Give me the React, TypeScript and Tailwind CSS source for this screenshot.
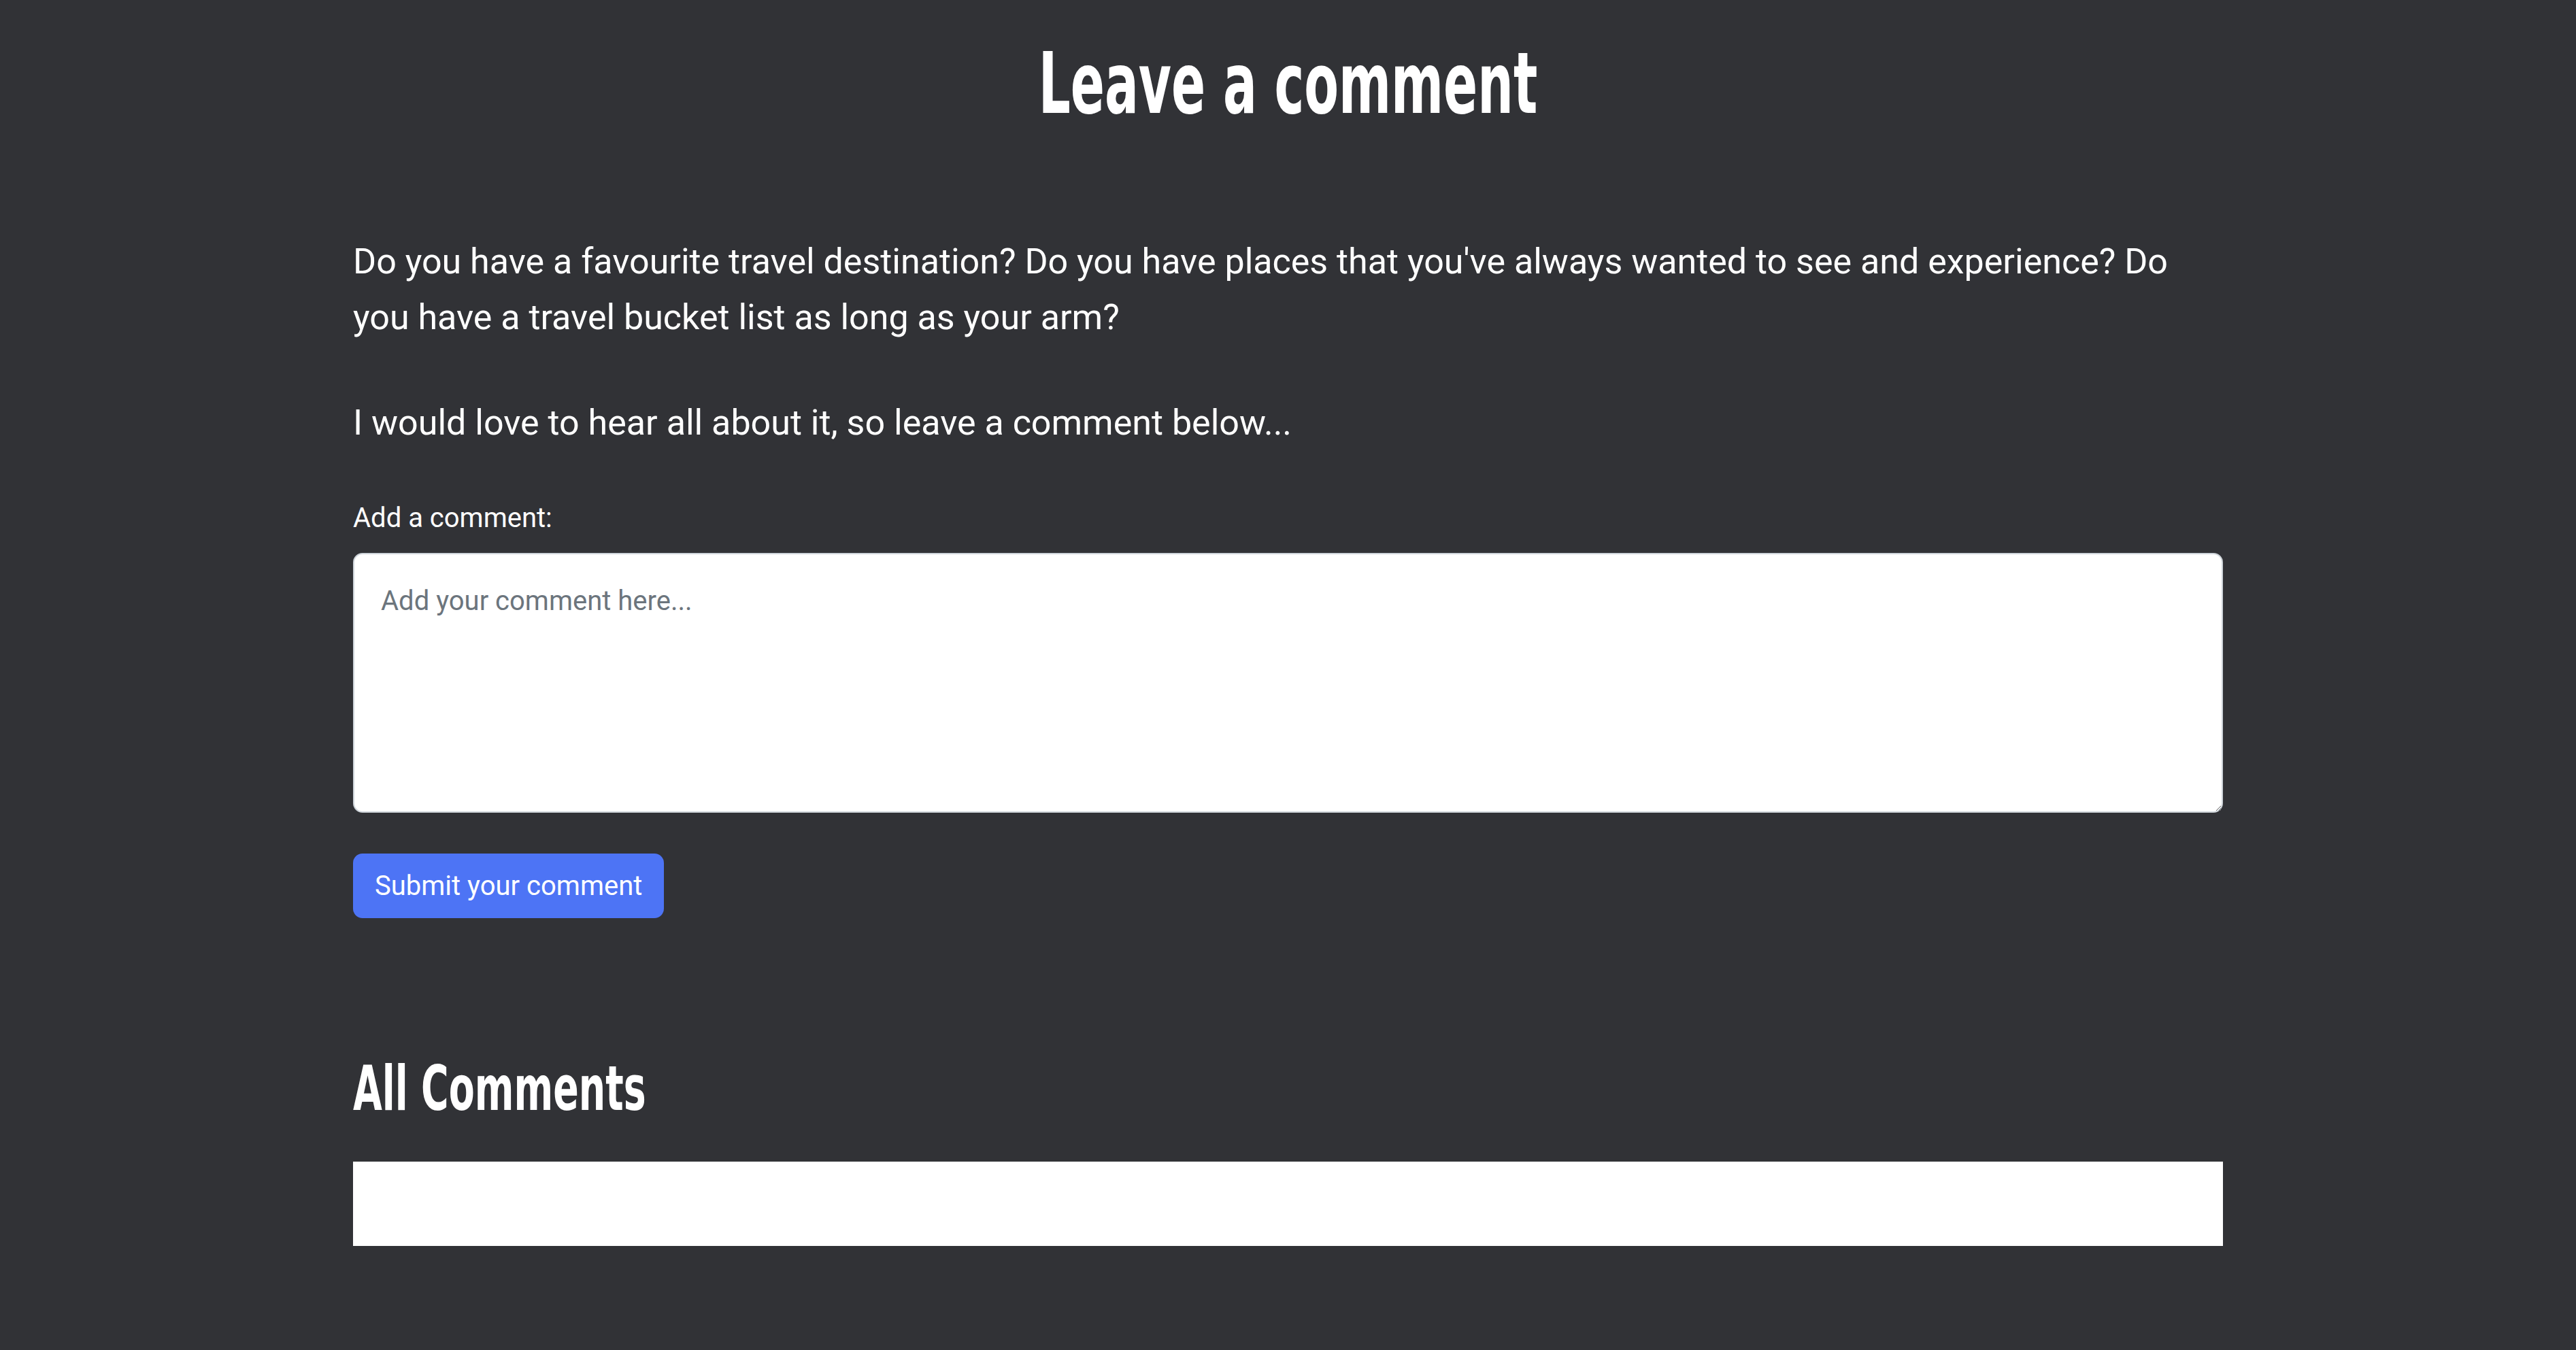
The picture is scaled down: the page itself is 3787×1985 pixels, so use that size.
export default function App() {
  return (
    <div className="min-h-screen bg-[#313236] font-['Roboto',sans-serif] text-white">
      <div className="mx-auto w-[2749px] pt-[48px] pb-[120px]">
        <h1 className="scale-x-79 scale-y-120 text-center font-['Liberation_Sans_Narrow','DejaVu_Sans_Condensed',sans-serif] text-[104px] leading-[150px] font-bold">
          Leave a comment
        </h1>

        <p className="mt-[146px] text-[52px] leading-[82px]">
          Do you have a favourite travel destination? Do you have places that you've always wanted to see and
          experience? Do you have a travel bucket list as long as your arm?
        </p>
        <p className="mt-[73px] text-[52px] leading-[82px]">I would love to hear all about it, so leave a comment below...</p>

        <label htmlFor="comment" className="mt-[70px] block text-[40px] leading-[58px]">
          Add a comment:
        </label>
        <textarea
          id="comment"
          rows={6}
          placeholder="Add your comment here..."
          className="mt-[22px] block h-[382px] w-full rounded-[14px] border-2 border-[#ced4da] bg-white px-[39px] pt-[40px] text-[40px] leading-[58px] text-[#212529] outline-none placeholder:text-[#6c757d]"
        />

        <button className="mt-[60px] block h-[95px] rounded-[14px] bg-[#4d74f5] px-[32px] text-[40px] text-white">
          Submit your comment
        </button>

        <h2 className="mt-[196px] origin-left scale-x-81 scale-y-120 font-['Liberation_Sans_Narrow','DejaVu_Sans_Condensed',sans-serif] text-[76px] leading-[110px] font-bold">
          All Comments
        </h2>
        <div className="mt-[52px] h-[124px] bg-white" />
      </div>
    </div>
  );
}
